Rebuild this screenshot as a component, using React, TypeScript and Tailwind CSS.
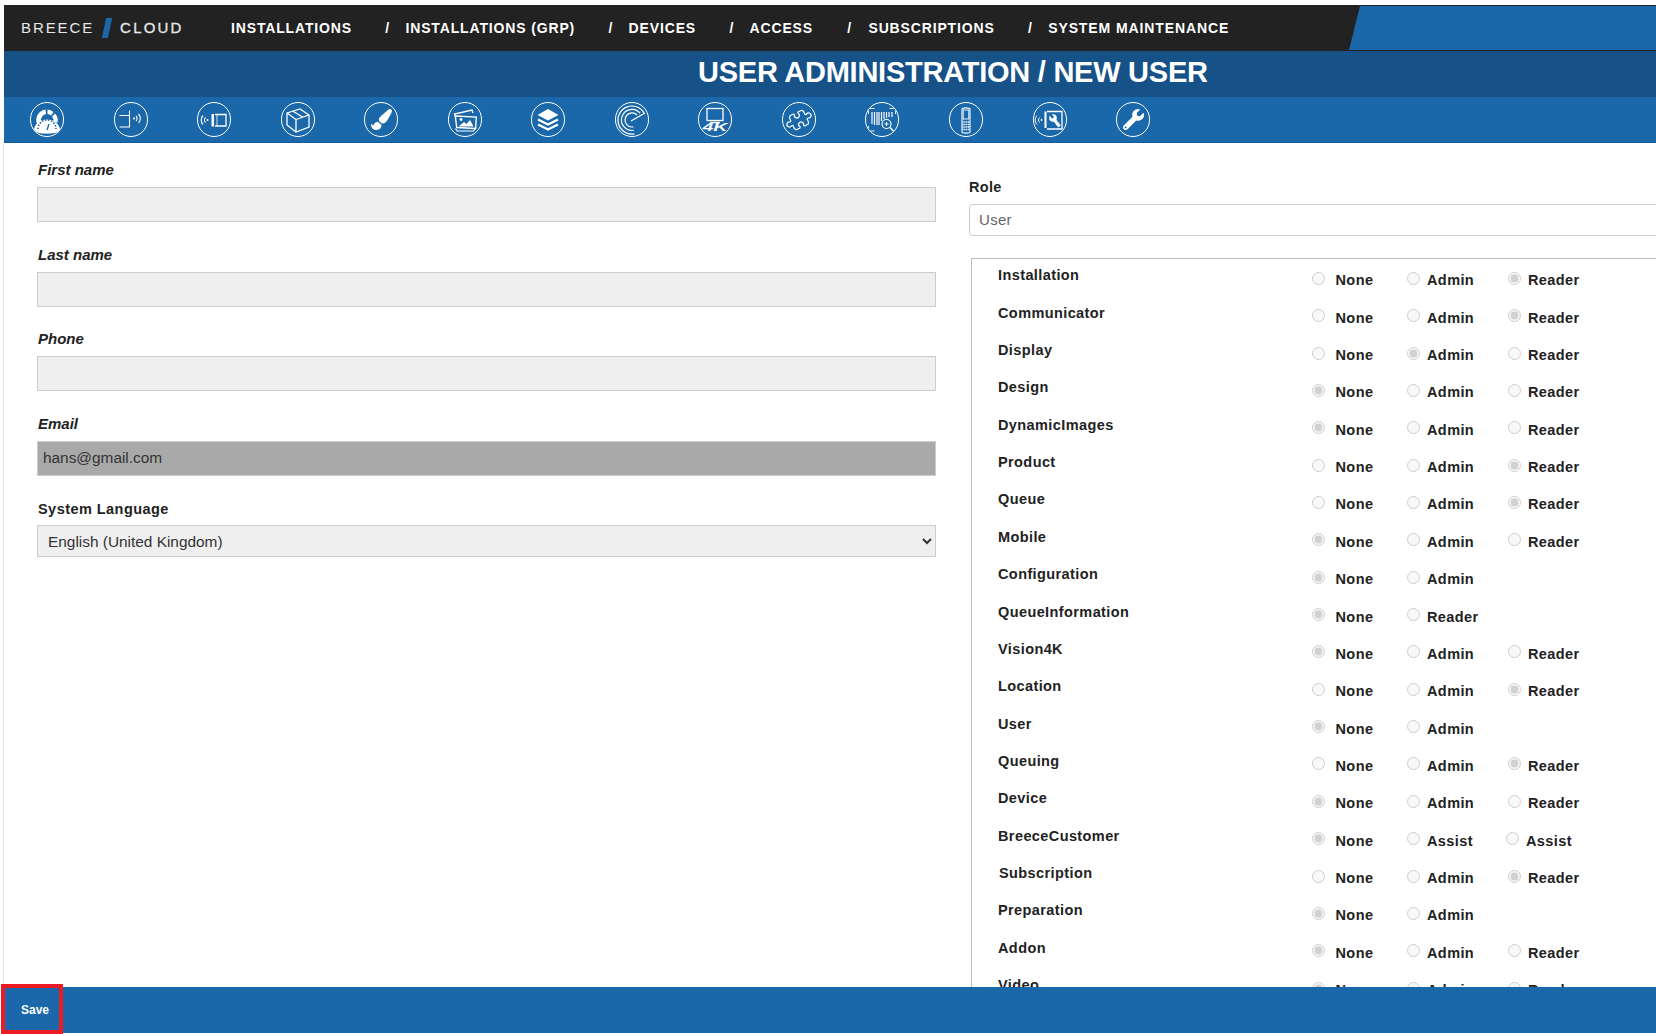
import { FaPaintBrush, FaWrench } from "react-icons/fa";
import { Puzzle } from "lucide-react";
import type { ReactNode } from "react";

const navItems = ["INSTALLATIONS", "INSTALLATIONS (GRP)", "DEVICES", "ACCESS", "SUBSCRIPTIONS", "SYSTEM MAINTENANCE"];

type Perm = { name: string; opts: string[]; sel: number };

const perms: Perm[] = [
  { name: "Installation", opts: ["None", "Admin", "Reader"], sel: 2 },
  { name: "Communicator", opts: ["None", "Admin", "Reader"], sel: 2 },
  { name: "Display", opts: ["None", "Admin", "Reader"], sel: 1 },
  { name: "Design", opts: ["None", "Admin", "Reader"], sel: 0 },
  { name: "DynamicImages", opts: ["None", "Admin", "Reader"], sel: 0 },
  { name: "Product", opts: ["None", "Admin", "Reader"], sel: 2 },
  { name: "Queue", opts: ["None", "Admin", "Reader"], sel: 2 },
  { name: "Mobile", opts: ["None", "Admin", "Reader"], sel: 0 },
  { name: "Configuration", opts: ["None", "Admin"], sel: 0 },
  { name: "QueueInformation", opts: ["None", "Reader"], sel: 0 },
  { name: "Vision4K", opts: ["None", "Admin", "Reader"], sel: 0 },
  { name: "Location", opts: ["None", "Admin", "Reader"], sel: 2 },
  { name: "User", opts: ["None", "Admin"], sel: 0 },
  { name: "Queuing", opts: ["None", "Admin", "Reader"], sel: 2 },
  { name: "Device", opts: ["None", "Admin", "Reader"], sel: 0 },
  { name: "BreeceCustomer", opts: ["None", "Assist", "Assist"], sel: 0 },
  { name: "Subscription", opts: ["None", "Admin", "Reader"], sel: 2 },
  { name: "Preparation", opts: ["None", "Admin"], sel: 0 },
  { name: "Addon", opts: ["None", "Admin", "Reader"], sel: 0 },
  { name: "Video", opts: ["None", "Admin", "Reader"], sel: 0 },
];

function Badge({ children }: { children: ReactNode }) {
  return (
    <div className="flex h-[35px] w-[34px] shrink-0 items-center justify-center overflow-hidden rounded-full border-[1.5px] border-white text-white">
      {children}
    </div>
  );
}

function Svg({ children }: { children: ReactNode }) {
  return (
    <svg viewBox="0 0 34 34" className="h-[34px] w-[34px] shrink-0" fill="none" stroke="currentColor" strokeWidth="1.1">
      {children}
    </svg>
  );
}

const toolbarIcons: ReactNode[] = [
  // dashboard gauge
  <Svg key="gauge">
    <path d="M7 21A10.5 10.5 0 0 1 15.5 6.6L16 11A6.5 6.5 0 0 0 11 18.5Z" fill="currentColor" stroke="none" />
    <path d="M17.5 6.5A10.5 10.5 0 0 1 23.5 9L21 12.5A6 6 0 0 0 17.5 11Z" fill="currentColor" stroke="none" />
    <path d="M25 10.5A10.5 10.5 0 0 1 27.5 20L23.5 18A6.5 6.5 0 0 0 22 13.5Z" fill="currentColor" stroke="none" />
    <path d="M3.5 28C4.5 21 10 16.5 17 16.5S29.5 21 30.5 28C26 31.5 8 31.5 3.5 28Z" fill="currentColor" stroke="none" />
    <path d="M8 26A9 9 0 0 1 26 26" stroke="#1a67aa" strokeWidth="1.6" strokeDasharray="1.5 1.5" />
    <path d="M17 27L19 21" stroke="#1a67aa" strokeWidth="1.3" />
  </Svg>,
  // router with signal
  <Svg key="router">
    <path d="M5.5 12.5H15.5M15.5 7.5V24.5M5.5 24H15.5" />
    <circle cx="20" cy="15.5" r="1" fill="currentColor" stroke="none" />
    <path d="M22 13A3.5 3.5 0 0 1 22 18M24.5 11A6.5 6.5 0 0 1 24.5 20" />
  </Svg>,
  // communicator with waves
  <Svg key="comm">
    <circle cx="10.5" cy="17" r="1" fill="currentColor" stroke="none" />
    <path d="M8.5 14.5A3.5 3.5 0 0 0 8.5 19.5M6 12.5A6.5 6.5 0 0 0 6 21.5" />
    <path d="M14.5 11H17V23.5H14.5Z" fill="currentColor" stroke="none" />
    <path d="M18 11.5H29V23H18" strokeWidth="1.3" />
    <path d="M20 11.5V23" strokeWidth="0.8" />
  </Svg>,
  // product box
  <Svg key="box">
    <path d="M6 10L19 6L28 12V24L15 29L6 22Z" strokeWidth="1.3" />
    <path d="M6 10L15 16.5V29M15 16.5L28 12M12 8.2L21.5 14" strokeWidth="1.3" />
  </Svg>,
  // design brush
  <FaPaintBrush key="brush" className="h-[21px] w-[21px]" />,
  // stacked images
  <Svg key="images">
    <path d="M7.5 13.5L6.5 11L24 7L25 10" strokeWidth="1.3" />
    <path d="M7 13.5H28V25H9Z" transform="rotate(3 17 19)" strokeWidth="1.4" />
    <path d="M7.5 25.5L9 28H25.5L27 26" strokeWidth="1.2" />
    <circle cx="13" cy="16.5" r="1.4" fill="currentColor" stroke="none" />
    <path d="M10.5 23.5L16 19L18.5 21L22 17L25.5 23.5Z" fill="currentColor" stroke="none" />
  </Svg>,
  // layers
  <Svg key="layers">
    <path d="M17 6L27.5 12L17 17.5L6.5 12Z" fill="currentColor" stroke="none" />
    <path d="M7 16.5L17 21.5L27 16.5M7 21.5L17 26.5L27 21.5" strokeWidth="2.2" />
  </Svg>,
  // radar
  <Svg key="radar">
    <path d="M29.1 10A14 14 0 1 0 19.4 30.8" strokeWidth="1.2" />
    <path d="M25 10.2A10.5 10.5 0 1 0 18.8 27.3" strokeWidth="1.2" />
    <path d="M22 12A7 7 0 1 0 18.2 23.9" strokeWidth="1.2" />
    <path d="M16 18L30 10" strokeWidth="1.2" />
  </Svg>,
  // monitor 4K
  <Svg key="4k">
    <rect x="9" y="5.5" width="16" height="12" strokeWidth="1.3" />
    <path d="M12 19.5H22" strokeWidth="1.3" />
    <text x="4.5" y="28" textLength="25" lengthAdjust="spacingAndGlyphs" fill="currentColor" stroke="none" fontFamily="'Liberation Sans', sans-serif" fontSize="10.5" fontWeight="700" fontStyle="italic">
      4K
    </text>
  </Svg>,
  // addon puzzle
  <Puzzle key="puzzle" size={24} strokeWidth={1.2} className="rotate-[20deg]" />,
  // barcode with magnifier
  <Svg key="barcode">
    <path d="M3.5 11V5.5H9.5M24.5 5.5H30.5V11M3.5 23V28H9.5" strokeWidth="0.9" />
    <path d="M7 9V21M9.5 9V22M12 9V22M14 9V22M16.5 9V18M19 9V16M21.5 9V15M24 9V14M27 9V14" strokeWidth="1.2" />
    <circle cx="21.5" cy="21" r="4.5" strokeWidth="1.2" />
    <path d="M19.5 21H23.5M21.5 19V23" strokeWidth="1" />
    <path d="M25 24.5L29 28.5" strokeWidth="1.6" />
  </Svg>,
  // mobile handheld
  <Svg key="mobile">
    <path d="M13 6C13 4.5 21 4.5 21 6V29C21 30.5 13 30.5 13 29Z" strokeWidth="1.1" />
    <rect x="14.2" y="7" width="5.6" height="9" strokeWidth="0.9" />
    <path d="M13.5 19H20.5M13.5 21.5H20.5M13.5 24H20.5M13.5 26.5H20.5" strokeWidth="1.6" strokeDasharray="1.2 .6" />
  </Svg>,
  // maintenance
  <Svg key="maint">
    <circle cx="8.5" cy="17" r=".9" fill="currentColor" stroke="none" />
    <path d="M6.5 14.5A3.5 3.5 0 0 0 6.5 19.5M4 12.5A6.5 6.5 0 0 0 4 21.5" strokeWidth="0.9" />
    <path d="M11.5 8.5H13.5V25H11.5Z" fill="currentColor" stroke="none" />
    <path d="M14 8.5H29V26H14" strokeWidth="1.3" />
    <circle cx="20" cy="15" r="3.8" fill="currentColor" stroke="none" />
    <path d="M20 15L26.5 23.5" strokeWidth="3" />
    <path d="M20 15L17.5 11.5" stroke="#1a67aa" strokeWidth="2.4" />
  </Svg>,
  // settings wrench
  <FaWrench key="wrench" className="h-[21px] w-[21px] -scale-x-100 rotate-90" />,
];

function Field({ label, italic = true, children }: { label: string; italic?: boolean; children: ReactNode }) {
  return (
    <div className="h-[84.5px]">
      <label
        className={`block pl-px font-bold text-[#222] ${
          italic ? "mb-[8px] h-[18px] text-[15px] leading-[18px] italic" : "mb-[6px] h-5 text-[14.5px] leading-5 tracking-[0.45px]"
        }`}
      >
        {label}
      </label>
      {children}
    </div>
  );
}

function PermRow({ perm }: { perm: Perm }) {
  return (
    <div className="flex h-[37.37px]">
      <div className={`h-5 w-[313px] text-[14.5px] leading-5 font-bold tracking-[0.4px] text-[#222] ${perm.name === "Subscription" ? "pl-px" : ""}`}>
        {perm.name}
      </div>
      <div className="flex pt-[5px]">
        {perm.opts.map((opt, i) => (
          <div
            key={i}
            className={`flex h-5 items-center ${i === 0 ? "w-[95px] gap-[10.5px]" : "gap-[7px]"} ${
              i === 1 ? (perm.name === "BreeceCustomer" ? "w-[99px]" : "w-[101px]") : ""
            }`}
          >
            <input
              type="radio"
              disabled
              checked={perm.sel === i}
              name={perm.name}
              className="mb-[4px] ml-px h-[13px] w-[13px] shrink-0"
            />
            <span className="text-[14.5px] leading-5 font-bold tracking-[0.4px] text-[#222]">{opt}</span>
          </div>
        ))}
      </div>
    </div>
  );
}

export default function App() {
  return (
    <div className="flex h-[1034px] flex-col overflow-hidden bg-white pt-[5px] pl-[3px] font-['Liberation_Sans',Arial,sans-serif]">
      {/* Header */}
      <header className="ml-px flex h-[46px] shrink-0 bg-[#222222]">
        <div className="flex w-[1345px] shrink-0 items-center">
          <div className="flex w-[227px] items-center pl-[17px] text-[15px] text-[#e8e8e8]">
            <span className="tracking-[1.9px]">BREECE</span>
            <span className="mr-[10px] ml-[10px] h-[20px] w-[6px] -skew-x-[12deg] bg-[#1a67aa]" />
            <span className="tracking-[2.2px] [-webkit-text-stroke:0.3px_#e8e8e8]">CLOUD</span>
          </div>
          <nav className="flex items-center pt-[1px] text-[14px] font-bold tracking-[0.85px] text-white">
            {navItems.map((item, i) => (
              <div key={item} className="flex items-center">
                {i > 0 && <span className={`pl-[18px] text-center ${i === 4 ? "w-[55.5px]" : "w-[53.5px]"}`}>/</span>}
                <span className={i === 5 ? "tracking-[0.9px]" : ""}>{item}</span>
              </div>
            ))}
          </nav>
        </div>
        <div className="my-px flex-1 bg-[#1a67aa] [clip-path:polygon(11px_0,100%_0,100%_100%,0_100%)]" />
      </header>

      {/* Title */}
      <div className="ml-px flex h-[46px] shrink-0 items-center bg-[#165287] pb-[3px] pl-[694px]">
        <h1 className="text-[29px] leading-none font-bold tracking-[-0.25px] text-white">USER ADMINISTRATION / NEW USER</h1>
      </div>

      {/* Toolbar */}
      <div className="ml-px flex h-[46px] shrink-0 gap-[49.55px] border-b border-[#125a9c] bg-[#1a67aa] pt-[5px] pl-[26px]">
        {toolbarIcons.map((icon, i) => (
          <Badge key={i}>{icon}</Badge>
        ))}
      </div>

      {/* Content */}
      <main className="flex min-h-0 flex-1 overflow-hidden border-l border-[#e5e5e5] pt-[18px] pl-[33px]">
        <section className="w-[899px] shrink-0">
          <Field label="First name">
            <input readOnly className="h-[35px] w-full border border-[#ccc] bg-[#efefef] px-[6px]" />
          </Field>
          <Field label="Last name">
            <input readOnly className="h-[35px] w-full border border-[#ccc] bg-[#efefef] px-[6px]" />
          </Field>
          <Field label="Phone">
            <input readOnly className="h-[35px] w-full border border-[#ccc] bg-[#efefef] px-[6px]" />
          </Field>
          <Field label="Email">
            <input
              readOnly
              value="hans@gmail.com"
              className="h-[35px] w-full border border-[#ccc] bg-[#a9a9a9] px-[5px] text-[15.4px] text-[#333]"
            />
          </Field>
          <Field label="System Language" italic={false}>
            <select defaultValue="en-GB" className="h-[32px] w-full border border-[#ccc] bg-[#efefef] pl-[6px] text-[15.4px] text-[#333]">
              <option value="en-GB">English (United Kingdom)</option>
            </select>
          </Field>
        </section>

        <section className="ml-[33px] w-[800px] shrink-0">
          <label className="mt-[16px] mb-[7px] block h-5 text-[14.5px] leading-5 font-bold tracking-[0.3px] text-[#222]">Role</label>
          <input
            readOnly
            value="User"
            className="h-[32px] w-full rounded-[4px] border border-[#ccc] bg-white px-[9px] pb-[2px] text-[15px] tracking-[0.3px] text-[#666]"
          />
          <div className="mt-[22px] ml-[2px] border-t border-l border-[#bbb] pt-[6.3px] pl-[26px]">
            {perms.map(perm => (
              <PermRow key={perm.name} perm={perm} />
            ))}
          </div>
        </section>
      </main>

      {/* Footer */}
      <footer className="relative mb-px h-[46px] shrink-0 bg-[#1a67aa]">
        <button className="ml-[18px] h-full text-[12px] font-bold text-white">Save</button>
        <div className="absolute top-[-3px] -left-[2px] h-[50px] w-[62px] border-4 border-[#ed1c24]" />
      </footer>
    </div>
  );
}
